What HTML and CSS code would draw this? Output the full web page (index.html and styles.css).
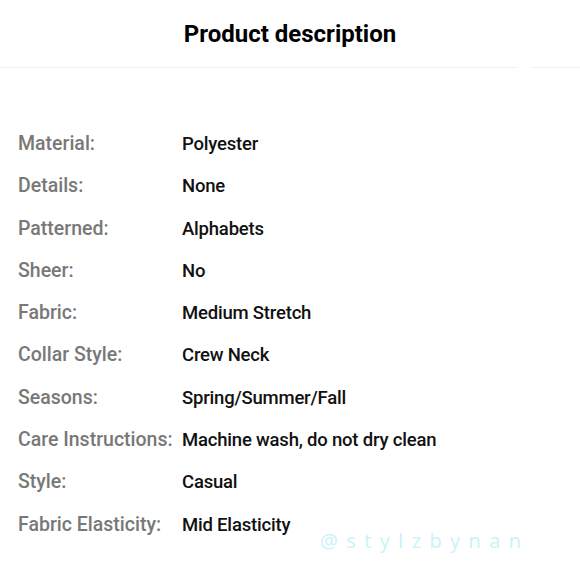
FILE: index.html
```html
<!DOCTYPE html>
<html>
<head>
<meta charset="utf-8">
<link rel="stylesheet" href="styles.css">
</head>
<body>
<div class="page">
  <header class="header">
    <h1 class="title">Product description</h1>
  </header>
  <div class="divider"><span class="seg seg-main"></span><span class="seg seg-end"></span></div>
  <dl class="specs">
    <div class="row"><dt>Material:</dt><dd>Polyester</dd></div>
    <div class="row"><dt>Details:</dt><dd>None</dd></div>
    <div class="row"><dt>Patterned:</dt><dd>Alphabets</dd></div>
    <div class="row"><dt>Sheer:</dt><dd>No</dd></div>
    <div class="row"><dt>Fabric:</dt><dd>Medium Stretch</dd></div>
    <div class="row"><dt>Collar Style:</dt><dd>Crew Neck</dd></div>
    <div class="row"><dt>Seasons:</dt><dd>Spring/Summer/Fall</dd></div>
    <div class="row"><dt>Care Instructions:</dt><dd>Machine wash, do not dry clean</dd></div>
    <div class="row"><dt>Style:</dt><dd>Casual</dd></div>
    <div class="row"><dt>Fabric Elasticity:</dt><dd>Mid Elasticity</dd></div>
  </dl>
  <div class="watermark">@stylzbynan</div>
</div>
</body>
</html>
```
FILE: styles.css
```css
html, body {
  margin: 0;
  padding: 0;
  background: #ffffff;
}
.page {
  position: relative;
  width: 580px;
  height: 580px;
  overflow: hidden;
  font-family: Roboto, "Liberation Sans", sans-serif;
}
.header {
  height: 67px;
  display: flex;
  align-items: center;
  justify-content: center;
}
.title {
  margin: 0;
  font-size: 24px;
  font-weight: 700;
  color: #000;
  line-height: 1;
  padding-top: 1px;
}
.divider {
  display: flex;
  height: 1px;
}
.seg {
  display: block;
  height: 1px;
  background: #f1f1f1;
}
.seg-main { width: 518px; }
.seg-end { width: 48px; margin-left: 14px; }
.specs {
  margin: 0;
  padding: 64px 0 0 18px;
}
.row {
  display: flex;
  height: 42.3px;
  align-items: baseline;
}
.row dt {
  width: 164px;
  flex: none;
  font-size: 19.5px;
  font-weight: 500;
  color: #787878;
  line-height: 24px;
}
.row dd {
  margin: 0;
  font-size: 18.5px;
  font-weight: 500;
  letter-spacing: -0.2px;
  color: #111111;
  line-height: 24px;
}
.watermark {
  position: absolute;
  left: 320px;
  top: 528px;
  font-family: "Open Sans", sans-serif;
  font-size: 20px;
  font-weight: 400;
  letter-spacing: 8.4px;
  color: #c9f3f8;
  line-height: 26px;
}
```
